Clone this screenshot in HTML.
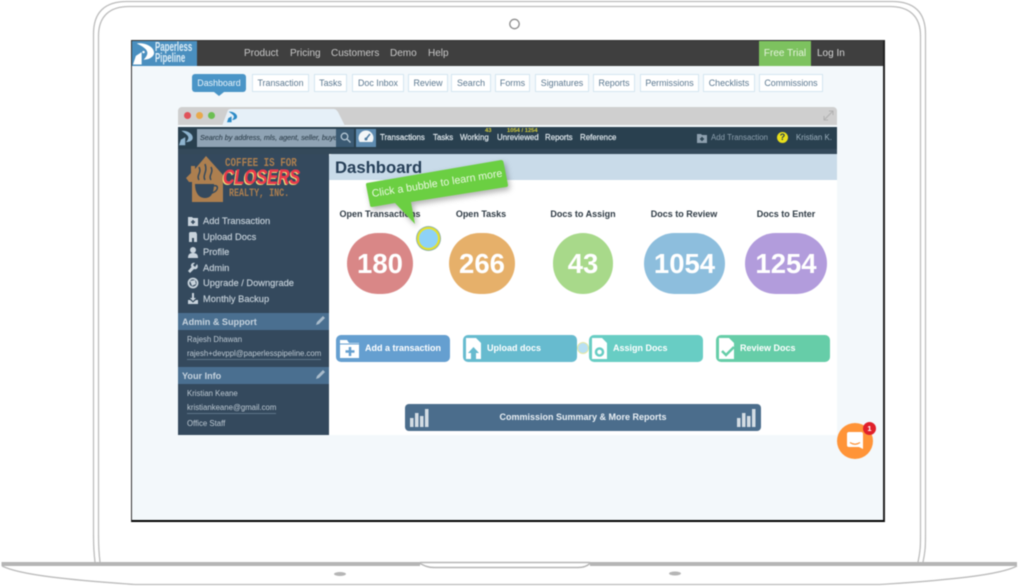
<!DOCTYPE html>
<html><head><meta charset="utf-8">
<style>
html,body{margin:0;padding:0;background:#fff;}
body{width:1019px;height:586px;position:relative;overflow:hidden;font-family:"Liberation Sans",sans-serif;}
.a{position:absolute;white-space:nowrap;}
svg{position:absolute;overflow:visible;}
#scr{position:absolute;left:0;top:0;width:1019px;height:586px;filter:blur(.42px);}
.tab{position:absolute;top:74px;height:16px;line-height:16px;border:1px solid #d5e6f1;background:#fff;color:#5b7890;font-size:8.9px;text-align:center;box-sizing:content-box;white-space:nowrap;}
.nav{position:absolute;top:45px;line-height:17px;color:#c8c8c8;font-size:10px;white-space:nowrap;}
.n2{position:absolute;top:132px;line-height:11px;color:#e6edf2;font-size:7.9px;-webkit-text-stroke:.15px #e6edf2;white-space:nowrap;}
.side{position:absolute;left:203px;color:#c5d0d9;font-size:9.3px;line-height:12px;-webkit-text-stroke:.15px #c5d0d9;white-space:nowrap;}
.sm{position:absolute;left:187px;color:#bcc8d2;font-size:7.8px;line-height:11px;white-space:nowrap;}
.bar{position:absolute;left:178px;width:151px;height:17px;background:#4a6f90;}
.bar span{position:absolute;left:4px;top:3px;color:#c6d3de;font-size:9.1px;font-weight:bold;line-height:12px;white-space:nowrap;}
.lbl{position:absolute;top:208px;width:120px;text-align:center;color:#2f3b45;font-size:9px;font-weight:bold;line-height:12px;white-space:nowrap;}
.bub{position:absolute;top:233px;height:61px;border-radius:31px;color:#fff;font-weight:bold;font-size:27.5px;line-height:62px;text-align:center;}
.btn{position:absolute;top:335px;height:27px;border-radius:5px;color:#fff;font-size:9px;font-weight:bold;line-height:27px;}
</style></head><body>
<div id="scr">
<!-- laptop lines -->
<svg width="1019" height="586" style="left:0;top:0" fill="none" stroke="#bcbcbc">
<path d="M95 562 C93.5 550 93.5 545 93.5 535 V34 C93.5 12 105 1.5 127 1.5 H892 C914 1.5 925.5 12 925.5 34 V535 C925.5 545 925.5 550 923 562" stroke-width="1.3"/>
<path d="M100 562 C98.5 550 98.5 545 98.5 535 V36 C98.5 16 110 6.5 129 6.5 H890 C909 6.5 920.5 16 920.5 36 V535 C920.5 545 920.5 550 918 562" stroke-width="1.3"/>
<path d="M420 564 L1.5 564 M590 564 H1017" stroke="#b5b5b5" stroke-width="4"/>
<path d="M420 562.5 H590" stroke="#b5b5b5" stroke-width="1.5"/>
<path d="M420 563.5 C425 566 428 567.5 434 567.5 H578 C584 567.5 587 566 590 563.5" stroke="#b5b5b5" stroke-width="1.5"/>
<path d="M2 566 C20 575 70 580 135 584.5 H880 C950 580 1000 575 1017 566" stroke="#bcbcbc" stroke-width="1.3"/>
<ellipse cx="340" cy="574" rx="6" ry="2" fill="#b5b5b5" stroke="none"/>
<ellipse cx="675" cy="573.5" rx="6" ry="2" fill="#b5b5b5" stroke="none"/>
<circle cx="514.5" cy="24" r="4.7" stroke="#8d8d8d" stroke-width="1.3" fill="#fff"/>
</svg>

<!-- screen -->
<div class="a" style="left:131px;top:40px;width:751px;height:479px;border:1px solid #333;border-bottom:2px solid #000;border-right:2px solid #222;background:#f3f8fb;"></div>
<div class="a" style="left:132px;top:41px;width:751px;height:25px;background:#3f3f3f;"></div>
<div class="a" style="left:132px;top:41px;width:65px;height:25px;background:#4a8fbf;"></div>
<svg style="left:133px;top:41px" width="23" height="25" viewBox="0 0 24 25"><path d="M4 2 C12 1 22 5 22 12 C22 15 18 19 11 19 C15 15 16 12 14 9 C12 6 8 4 4 2Z M3 15 L9 11 V24 H0Z" fill="#fff"/><circle cx="11" cy="11" r="1.3" fill="#fff"/></svg>
<div class="a" style="left:155px;top:41.5px;color:#dcecf6;font-weight:bold;font-size:12.5px;line-height:11.5px;transform:scaleX(.63);transform-origin:0 0;">Paperless<br>Pipeline</div>
<div class="nav" style="left:244px;">Product</div>
<div class="nav" style="left:290px;">Pricing</div>
<div class="nav" style="left:331px;">Customers</div>
<div class="nav" style="left:390px;">Demo</div>
<div class="nav" style="left:428px;">Help</div>
<div class="a" style="left:759px;top:41px;width:52px;height:25px;background:#7dc25f;color:#e4f3dc;font-size:10px;line-height:25px;text-align:center;">Free Trial</div>
<div class="nav" style="left:817px;color:#d5d5d5;">Log In</div>

<!-- tabs -->
<div class="tab" style="left:192px;width:54px;height:18px;line-height:18px;border:0;border-radius:3px;background:#4a95c7;color:#e8f3fa;">Dashboard</div>
<div class="a" style="left:214px;top:92px;width:0;height:0;border:5px solid transparent;border-top:4px solid #4a95c7;border-bottom:0;"></div>
<div class="tab" style="left:252px;width:55px;">Transaction</div>
<div class="tab" style="left:314px;width:31px;">Tasks</div>
<div class="tab" style="left:352px;width:50px;">Doc Inbox</div>
<div class="tab" style="left:408px;width:38px;">Review</div>
<div class="tab" style="left:451px;width:38px;">Search</div>
<div class="tab" style="left:495px;width:33px;">Forms</div>
<div class="tab" style="left:535px;width:52px;">Signatures</div>
<div class="tab" style="left:593px;width:40px;">Reports</div>
<div class="tab" style="left:640px;width:57px;">Permissions</div>
<div class="tab" style="left:703px;width:50px;">Checklists</div>
<div class="tab" style="left:759px;width:62px;">Commissions</div>

<!-- browser -->
<div class="a" style="left:178px;top:107px;width:659px;height:18px;background:#cfcfcf;border-radius:4px 4px 0 0;"></div>
<svg style="left:178px;top:107px" width="180" height="20"><path d="M44 19 L50 3 Q51 2 53 2 H156 Q158 2 160 5 L167 19Z" fill="#e6f0f8"/></svg>
<div class="a" style="left:184px;top:112px;width:7px;height:7px;border-radius:50%;background:#e0525a;"></div>
<div class="a" style="left:196px;top:112px;width:7px;height:7px;border-radius:50%;background:#e8a94c;"></div>
<div class="a" style="left:208px;top:112px;width:7px;height:7px;border-radius:50%;background:#6cbf52;"></div>
<svg style="left:227px;top:111px" width="11" height="12" viewBox="0 0 24 25"><path d="M4 1 C12 0 22 5 22 12 C22 16 18 19 11 19 C15 15 16 12 14 9 C12 6 8 4 4 1Z M3 15 L10 11 V24 H0Z" fill="#2b8ac6"/></svg>
<svg style="left:823px;top:110px" width="11" height="11" fill="none" stroke="#b2b2b2"><path d="M1 10 L10 1 M6 1 H10 V5 M1 6 V10 H5"/></svg>

<!-- app nav -->
<div class="a" style="left:178px;top:127px;width:659px;height:22px;background:#29404f;"></div>
<div class="a" style="left:178px;top:149px;width:659px;height:5px;background:#34495a;"></div>
<svg style="left:179px;top:130px" width="15" height="16" viewBox="0 0 24 25"><path d="M4 1 C12 0 22 5 22 12 C22 16 18 19 11 19 C15 15 16 12 14 9 C12 6 8 4 4 1Z M3 15 L10 11 V24 H0Z" fill="#8fb4cf"/></svg>
<div class="a" style="left:197px;top:129px;width:140px;height:18px;background:#8fa3b4;overflow:hidden;color:#2e3f4c;font-size:7.2px;font-style:italic;-webkit-text-stroke:.1px #2e3f4c;line-height:18px;"><span style="padding-left:3px;">Search by address, mls, agent, seller, buyer</span></div>
<div class="a" style="left:336px;top:129px;width:18px;height:18px;background:#3b5a73;"></div>
<svg style="left:340px;top:132px" width="11" height="11" fill="none" stroke="#b5c7d5" stroke-width="1.3"><circle cx="4.5" cy="4.5" r="3.3"/><path d="M7 7 L10.5 10.5"/></svg>
<div class="a" style="left:356px;top:129px;width:20px;height:18px;background:#5e8bb0;"></div>
<svg style="left:358px;top:130px" width="16" height="16"><circle cx="8" cy="8" r="7.5" fill="#f3f6f8"/><path d="M8 9 L12 4" stroke="#4d7ba1" stroke-width="1.5"/><path d="M1.5 12 A7.5 7.5 0 0 0 14.5 12 Z" fill="#5e8bb0"/><circle cx="8" cy="9" r="1.5" fill="#4d7ba1"/></svg>
<div class="n2" style="left:380px;">Transactions</div>
<div class="n2" style="left:433px;">Tasks</div>
<div class="n2" style="left:460px;">Working</div>
<div class="n2" style="left:497px;">Unreviewed</div>
<div class="n2" style="left:545px;">Reports</div>
<div class="n2" style="left:580px;">Reference</div>
<div class="a" style="left:485px;top:127.5px;color:#d8cf3a;font-size:5.8px;line-height:7px;font-weight:bold;">43</div>
<div class="a" style="left:507px;top:127.5px;color:#d8cf3a;font-size:5.8px;line-height:7px;font-weight:bold;">1054 / 1254</div>
<svg style="left:697px;top:132px" width="11" height="11"><path d="M0 2 H4 L5 3 H10 V11 H0Z" fill="#8ea0af"/><path d="M5 5 V9 M3 7 H7" stroke="#29404f" stroke-width="1.5"/></svg>
<div class="n2" style="left:711px;color:#8ea0af;-webkit-text-stroke:0;">Add Transaction</div>
<div class="a" style="left:777px;top:132px;width:11px;height:11px;border-radius:50%;background:#e8df1c;color:#29404f;font-size:9px;font-weight:bold;line-height:11px;text-align:center;">?</div>
<div class="n2" style="left:796px;color:#9db0be;-webkit-text-stroke:0;">Kristian K.</div>

<!-- sidebar -->
<div class="a" style="left:178px;top:154px;width:151px;height:281px;background:#34495d;"></div>
<svg style="left:186px;top:155px" width="40" height="48" viewBox="0 0 40 48">
<path d="M0 23 L5 18 V11 H9 V14 L20 1 L37 20 V47 H6 V27 H3Z" fill="#ad7f4f"/>
<path d="M9 29 H28 C28 38 25 43 19 43 C13 43 9 38 9 29Z" fill="#34495d"/>
<path d="M27 31 C33 29 33 36 26 38" fill="none" stroke="#34495d" stroke-width="1.5"/>
<path d="M13 25 C10 20 16 18 13 12 M19 25 C16 20 22 17 19 9 M25 25 C22 20 28 18 25 12" fill="none" stroke="#34495d" stroke-width="1.5"/>
</svg>
<div class="a" style="left:225px;top:157px;color:#ad7f4f;font-family:'Liberation Mono',monospace;font-weight:bold;font-size:11.5px;line-height:13px;transform:scaleX(.8);transform-origin:0 0;">COFFEE IS FOR</div>
<div class="a" style="left:223px;top:166px;color:#ea3a4c;font-weight:bold;font-style:italic;font-size:21px;line-height:24px;text-shadow:-1.5px 1px 0 #f3e37c;-webkit-text-stroke:.3px #ea3a4c;transform:scaleX(.76);transform-origin:0 0;">CLOSERS</div>
<div class="a" style="left:229px;top:188px;color:#ad7f4f;font-family:'Liberation Mono',monospace;font-weight:bold;font-size:11px;line-height:13px;transform:scaleX(.76);transform-origin:0 0;">REALTY, INC.</div>

<svg style="left:187px;top:215px" width="12" height="90" fill="#c8d3dc">
<path d="M1 2 H5 L6 3 H11 V11 H1Z"/><path d="M6 5 V9 M4 7 H8" stroke="#34495d" stroke-width="1.5"/>
<path d="M3 17 H9 L10 19 V27 H7 V23 H5 V27 H2 V18Z"/>
<circle cx="6" cy="35" r="3"/><path d="M1 43 C1 39 3 38 6 38 C9 38 11 39 11 43Z"/>
<path d="M10 49 L8 52 L6 50 L8 48 C5 47 3 50 4.5 52 L1 56 L3 58 L7 54 C10 55 12 52 10 49Z"/>
<circle cx="6" cy="68" r="4.5" fill="none" stroke="#c8d3dc" stroke-width="1.8"/><path d="M3 66 L8 65 L9 69 L5 71Z"/>
<path d="M5 78 H7 V83 H9 L6 86 L3 83 H5Z M1 85 H3 L6 87.5 L9 85 H11 V89 H1Z"/>
</svg>
<div class="side" style="top:215px;">Add Transaction</div>
<div class="side" style="top:231px;">Upload Docs</div>
<div class="side" style="top:246px;">Profile</div>
<div class="side" style="top:262px;">Admin</div>
<div class="side" style="top:277px;">Upgrade / Downgrade</div>
<div class="side" style="top:293px;">Monthly Backup</div>

<div class="bar" style="top:313px;"><span>Admin &amp; Support</span></div>
<svg style="left:315px;top:315px" width="11" height="11"><path d="M1 10 L2 7 L8 1 L10 3 L4 9Z" fill="#a9bccb"/></svg>
<div class="sm" style="top:334px;">Rajesh Dhawan</div>
<div class="sm" style="top:349px;border-bottom:1px solid #5d7488;line-height:10px;">rajesh+devppl@paperlesspipeline.com</div>
<div class="bar" style="top:367px;"><span>Your Info</span></div>
<svg style="left:315px;top:369px" width="11" height="11"><path d="M1 10 L2 7 L8 1 L10 3 L4 9Z" fill="#a9bccb"/></svg>
<div class="sm" style="top:388px;">Kristian Keane</div>
<div class="sm" style="top:403px;border-bottom:1px solid #5d7488;line-height:10px;">kristiankeane@gmail.com</div>
<div class="sm" style="top:418px;">Office Staff</div>

<!-- content -->
<div class="a" style="left:329px;top:154px;width:508px;height:281px;background:#fff;border-radius:3px 0 0 0;"></div>
<div class="a" style="left:329px;top:154px;width:508px;height:26px;background:#c9dbe9;border-radius:3px 0 0 0;"></div>
<div class="a" style="left:335px;top:156px;color:#263f58;font-size:16.7px;font-weight:bold;line-height:24px;">Dashboard</div>

<div class="lbl" style="left:320px;">Open Transactions</div>
<div class="lbl" style="left:421px;">Open Tasks</div>
<div class="lbl" style="left:523px;">Docs to Assign</div>
<div class="lbl" style="left:624px;">Docs to Review</div>
<div class="lbl" style="left:726px;">Docs to Enter</div>

<div class="bub" style="left:347px;width:66px;background:#d98787;">180</div>
<div class="bub" style="left:449px;width:66px;background:#e6b06a;">266</div>
<div class="bub" style="left:553px;width:60px;background:#a8d98a;">43</div>
<div class="bub" style="left:644px;width:81px;background:#8dbedd;">1054</div>
<div class="bub" style="left:745px;width:82px;background:#b29cdc;">1254</div>

<!-- tooltip -->
<svg style="left:360px;top:155px;filter:drop-shadow(2px 3px 3px rgba(0,0,0,.3));" width="155" height="75"><path d="M7 28 L141 5 Q143 5 143.5 7 L148 30 Q148 32 146 32 L51 47 L55 69 L35 48 L12 52 Q10 52 10 50 L6 30 Q6 28 7 28Z" fill="#6bcf42"/></svg>
<div class="a" style="left:373px;top:188px;color:#e9f8e0;font-size:10.6px;line-height:13px;transform:rotate(-9deg);transform-origin:0 100%;">Click a bubble to learn more</div>
<div class="a" style="left:417px;top:227px;width:23px;height:23px;box-sizing:border-box;border-radius:50%;background:#8ed2f7;border:2px solid #e7e22a;box-shadow:0 0 0 1px #8fb3a7;"></div>

<!-- buttons -->
<div class="btn" style="left:336px;width:114px;background:#659fd0;"><span class="a" style="left:29px;">Add a transaction</span>
<svg style="left:4px;top:3px" width="20" height="21"><path d="M0 2 H7 L9 5 H19 V20 H0Z" fill="#fff"/><path d="M0 6 H19" stroke="#659fd0"/><path d="M10 9 V18 M5.5 13.5 H14.5" stroke="#659fd0" stroke-width="2.5"/></svg></div>
<div class="btn" style="left:463px;width:114px;background:#67bbcf;"><span class="a" style="left:24px;">Upload docs</span>
<svg style="left:3px;top:3px" width="15" height="21"><path d="M0 0 H10 L15 5 V21 H0Z" fill="#fff"/><path d="M7.5 9 L13 15 H10 V21 H5 V15 H2Z" fill="#67bbcf"/></svg></div>
<div class="a" style="left:577px;top:342px;width:12px;height:12px;box-sizing:border-box;border-radius:50%;background:#b9e0f3;border:1px solid #e5e8a5;"></div>
<div class="btn" style="left:589px;width:114px;background:#68cdc4;"><span class="a" style="left:24px;">Assign Docs</span>
<svg style="left:3px;top:3px" width="15" height="21"><path d="M0 0 H10 L15 5 V21 H0Z" fill="#fff"/><circle cx="7.5" cy="14" r="3.5" fill="none" stroke="#68cdc4" stroke-width="2.5"/></svg></div>
<div class="btn" style="left:716px;width:114px;background:#66cda8;"><span class="a" style="left:24px;">Review Docs</span>
<svg style="left:3px;top:3px" width="16" height="21"><path d="M0 0 H10 L15 5 V21 H0Z" fill="#fff"/><path d="M3 13 L7 17 L15 9" fill="none" stroke="#66cda8" stroke-width="2.5"/></svg></div>

<div class="a" style="left:405px;top:404px;width:356px;height:27px;border-radius:4px;background:#4b6d8c;color:#e9eff4;font-size:9px;font-weight:bold;line-height:27px;text-align:center;">Commission Summary &amp; More Reports</div>
<svg style="left:409px;top:408px" width="20" height="20" fill="#d3dce3"><rect x="1" y="10" width="3.5" height="9"/><rect x="6" y="5" width="3.5" height="14"/><rect x="11" y="8" width="3.5" height="11"/><rect x="16" y="1" width="3.5" height="18"/></svg>
<svg style="left:736px;top:408px" width="20" height="20" fill="#d3dce3"><rect x="1" y="10" width="3.5" height="9"/><rect x="6" y="5" width="3.5" height="14"/><rect x="11" y="8" width="3.5" height="11"/><rect x="16" y="1" width="3.5" height="18"/></svg>

<!-- chat -->
<div class="a" style="left:837px;top:423px;width:36px;height:36px;border-radius:50%;background:#ff9438;"></div>
<svg style="left:846px;top:432px" width="18" height="19"><path d="M3 0 H15 Q17 0 17 2 V17 L13 15 H3 Q1 15 1 13 V2 Q1 0 3 0Z" fill="#fff"/><path d="M4 10.5 Q9 14 14 10.5" fill="none" stroke="#ff9438" stroke-width="1.2"/></svg>
<div class="a" style="left:863px;top:422px;width:13px;height:13px;border-radius:50%;background:#e0202a;color:#fff;font-size:7.5px;font-weight:bold;line-height:13px;text-align:center;">1</div>
</div>
</body></html>
